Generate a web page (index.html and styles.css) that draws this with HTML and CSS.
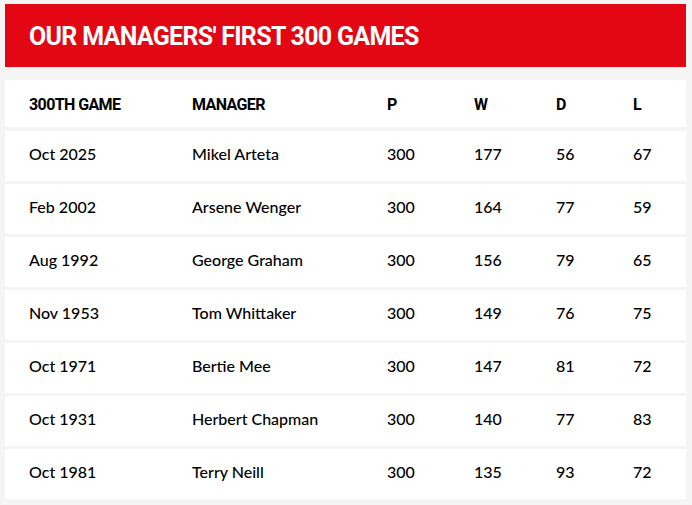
FILE: index.html
```html
<!DOCTYPE html>
<html lang="en">
<head>
<meta charset="utf-8">
<title>Our Managers' First 300 Games</title>
<link rel="stylesheet" href="styles.css">
</head>
<body>
<div class="panel">
  <header class="banner"><h1 class="banner-title">OUR MANAGERS' FIRST 300 GAMES</h1></header>
  <div class="table">
    <div class="row head">
      <div>300TH GAME</div><div>MANAGER</div><div>P</div><div>W</div><div>D</div><div>L</div>
    </div>
    <div class="row"><div>Oct 2025</div><div>Mikel Arteta</div><div>300</div><div>177</div><div>56</div><div>67</div></div>
    <div class="row"><div>Feb 2002</div><div>Arsene Wenger</div><div>300</div><div>164</div><div>77</div><div>59</div></div>
    <div class="row"><div>Aug 1992</div><div>George Graham</div><div>300</div><div>156</div><div>79</div><div>65</div></div>
    <div class="row"><div>Nov 1953</div><div>Tom Whittaker</div><div>300</div><div>149</div><div>76</div><div>75</div></div>
    <div class="row"><div>Oct 1971</div><div>Bertie Mee</div><div>300</div><div>147</div><div>81</div><div>72</div></div>
    <div class="row"><div>Oct 1931</div><div>Herbert Chapman</div><div>300</div><div>140</div><div>77</div><div>83</div></div>
    <div class="row"><div>Oct 1981</div><div>Terry Neill</div><div>300</div><div>135</div><div>93</div><div>72</div></div>
  </div>
</div>
</body>
</html>
```
FILE: styles.css
```css
html, body {
  margin: 0;
  background: #f5f5f5;
}
body {
  padding: 4px 6px 0 5px;
  font-family: "Lato", "Noto Sans", sans-serif;
  color: #000;
}
.banner {
  background: #e30613;
  height: 63px;
  display: flex;
  align-items: center;
  padding-left: 24px;
}
.banner-title {
  margin: 0;
  color: #fff;
  font-family: "Roboto", sans-serif;
  font-weight: 700;
  font-size: 25px;
  letter-spacing: -0.7px;
  line-height: 1;
  padding-top: 1px;
}
.table {
  margin-top: 13px;
  display: flex;
  flex-direction: column;
  gap: 3px;
}
.row {
  background: #fff;
  display: grid;
  grid-template-columns: 163px 195px 87px 82px 77px 1fr;
  align-items: center;
  padding-left: 24px;
  height: 50px;
  font-size: 16px;
  font-weight: 500;
  padding-bottom: 5px;
  box-sizing: border-box;
}
.row.head {
  height: 47px;
  margin-bottom: 1px;
  padding-bottom: 0;
  padding-top: 2px;
  font-family: "Roboto", sans-serif;
  font-weight: 700;
  font-size: 16px;
  letter-spacing: -0.6px;
}
```
